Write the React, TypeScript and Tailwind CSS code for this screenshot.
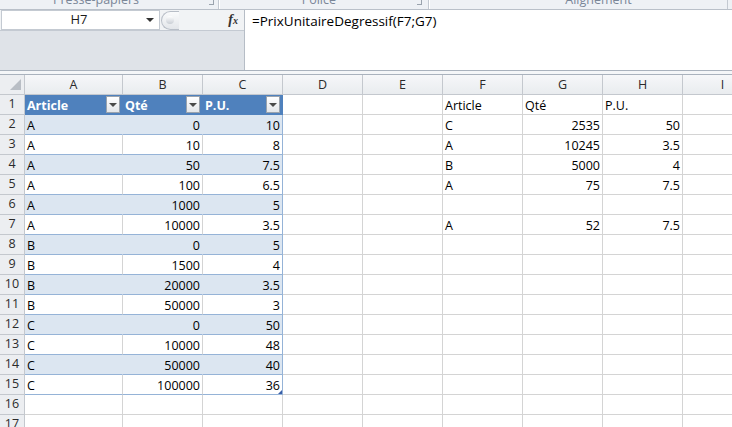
import React from 'react';

const COLS = ['A', 'B', 'C', 'D', 'E', 'F', 'G', 'H', 'I'];

type V = string | number | null;

const table: [string, number, number][] = [
  ['A', 0, 10],
  ['A', 10, 8],
  ['A', 50, 7.5],
  ['A', 100, 6.5],
  ['A', 1000, 5],
  ['A', 10000, 3.5],
  ['B', 0, 5],
  ['B', 1500, 4],
  ['B', 20000, 3.5],
  ['B', 50000, 3],
  ['C', 0, 50],
  ['C', 10000, 48],
  ['C', 50000, 40],
  ['C', 100000, 36],
];

const right: Record<number, V[]> = {
  1: ['Article', 'Qté', 'P.U.'],
  2: ['C', 2535, 50],
  3: ['A', 10245, 3.5],
  4: ['B', 5000, 4],
  5: ['A', 75, 7.5],
  7: ['A', 52, 7.5],
};

function FilterButton() {
  return (
    <div className="mr-[2px] flex h-[17px] w-[14px] shrink-0 items-center justify-center self-center border border-[#9aa3ad] bg-gradient-to-b from-[#ffffff] to-[#e3e6ea]">
      <div className="h-0 w-0 border-x-[4px] border-t-[4px] border-x-transparent border-t-[#4a4a4a]" />
    </div>
  );
}

function Cell({ r, c }: { r: number; c: number }) {
  let value: V = null;
  let header = false;
  if (c <= 3 && r === 1) {
    value = ['Article', 'Qté', 'P.U.'][c - 1];
    header = true;
  } else if (c <= 3 && r >= 2 && r <= 15) {
    value = table[r - 2][c - 1];
  } else if (c >= 6 && c <= 8 && right[r]) {
    value = right[r][c - 6];
  }

  const inTable = c <= 3 && r <= 15;
  let cls = 'border-r border-b bg-white border-[#d4d4d4]';
  if (inTable) {
    if (r === 1) {
      cls = 'border-r border-b bg-[#4f81bd] border-[#4f81bd]';
    } else if (r % 2 === 0) {
      cls =
        c < 3
          ? 'border-r border-b bg-[#dce6f1] border-r-[#dce6f1] border-b-[#95b3d7]'
          : 'border-r border-b bg-[#dce6f1] border-[#95b3d7]';
    } else {
      cls =
        c < 3
          ? 'border-r border-b bg-white border-r-[#d4d4d4] border-b-[#95b3d7]'
          : 'border-r border-b bg-white border-[#95b3d7]';
    }
  }

  const isNum = typeof value === 'number';
  return (
    <div
      className={`relative flex items-center overflow-hidden ${cls} ${
        isNum ? 'justify-end pr-[2px]' : 'justify-between pl-[2px]'
      }`}
    >
      {value !== null && (
        <span
          className={`mt-[3px] whitespace-nowrap leading-none ${
            header ? 'font-bold text-white' : 'text-black'
          }`}
        >
          {String(value)}
        </span>
      )}
      {header && <FilterButton />}
      {inTable && r === 15 && c === 3 && (
        <div className="absolute bottom-0 right-0 h-0 w-0 border-b-[4px] border-l-[4px] border-b-[#3a5fa8] border-l-transparent" />
      )}
    </div>
  );
}

function RibbonLabels() {
  return (
    <div className="h-[10px] overflow-hidden border-b border-[#b9c0c9] bg-[#eef1f5]">
      <div className="-mt-[7px] flex h-[16px] items-start text-[12.5px] leading-[14px] text-[#7a8698]">
        <div className="flex w-[218px] items-start justify-end">
          <span className="mr-[70px]">Presse-papiers</span>
          <div className="mr-[4px] mt-[7px] h-[5px] w-[5px] border-b border-r border-[#9aa3ad]" />
        </div>
        <div className="h-[16px] w-[1px] bg-[#c3c9d1]" />
        <div className="h-[16px] w-[1px] bg-white" />
        <div className="flex w-[208px] items-start justify-end">
          <span className="mr-[81px]">Police</span>
          <div className="mr-[6px] mt-[7px] h-[5px] w-[5px] border-b border-r border-[#9aa3ad]" />
        </div>
        <div className="h-[16px] w-[1px] bg-[#c3c9d1]" />
        <div className="h-[16px] w-[1px] bg-white" />
        <div className="flex w-[297px] justify-center pl-[40px]">
          <span>Alignement</span>
        </div>
        <div className="h-[16px] w-[1px] bg-[#c3c9d1]" />
      </div>
    </div>
  );
}

function FormulaBar() {
  return (
    <div className="flex h-[61px] border-b border-[#a9b2bd]">
      <div className="flex w-[245px] flex-col border-r border-[#b6bdc6] bg-[#dfe3e8]">
        <div className="flex h-[21px] border-b border-[#c4cad2] bg-[#f1f3f5]">
          <div className="ml-[1px] flex w-[159px] items-center border border-[#c4cad2] bg-white">
            <span className="flex-1 pl-[10px] text-center text-[13px] text-[#1b1b1b]">H7</span>
            <div className="mr-[5px] h-0 w-0 border-x-[4px] border-t-[4px] border-x-transparent border-t-[#333]" />
          </div>
          <div className="flex flex-1 items-center">
            <div className="ml-[1px] flex h-[19px] w-[18px] items-center justify-start rounded-l-full border border-r-0 border-[#b8bec7] bg-gradient-to-b from-[#fafbfc] to-[#e3e6ea] pl-[4px]">
              <div className="h-[8px] w-[8px] rounded-full bg-gradient-to-b from-[#ffffff] to-[#c9ced5]" />
            </div>
            <div className="flex-1" />
            <span className="mr-[6px] font-['Liberation_Serif',serif] text-[14px] font-bold italic leading-none text-[#333]">
              f<span className="text-[10px]">x</span>
            </span>
          </div>
        </div>
      </div>
      <div className="flex-1 bg-white pl-[7px] pt-[3px] text-[13.5px] leading-[16px] text-black">
        =PrixUnitaireDegressif(F7;G7)
      </div>
    </div>
  );
}

export default function App() {
  const rows = Array.from({ length: 17 }, (_, i) => i + 1);
  return (
    <div className="h-[427px] w-[732px] overflow-hidden bg-white font-['Open_Sans',sans-serif] text-[12.5px]">
      <RibbonLabels />
      <FormulaBar />
      <div className="h-[4px] border-b border-[#a9b2bd] bg-[#f4f6f8]" />
      <div className="grid grid-cols-[25px_98px_80px_80px_80px_80px_80px_80px_80px_80px] auto-rows-[20px]">
        <div className="relative border-b border-r border-[#c4c8ce] bg-[#eceef1]">
          <div className="absolute bottom-[4px] right-[3px] h-0 w-0 border-b-[11px] border-l-[11px] border-b-[#b9bec5] border-l-transparent" />
        </div>
        {COLS.map((col) => (
          <div
            key={col}
            className="flex items-center justify-center border-b border-r border-[#c4c8ce] bg-gradient-to-b from-[#f6f7f9] to-[#e9ecef] pt-[1px] text-[#2b2b2b]"
          >
            {col}
          </div>
        ))}
        {rows.map((r) => (
          <React.Fragment key={r}>
            <div className="flex items-center justify-center border-b border-r border-[#c4c8ce] bg-[#eceef1] text-[#2b2b2b]">
              {r}
            </div>
            {COLS.map((_, ci) => (
              <Cell key={ci} r={r} c={ci + 1} />
            ))}
          </React.Fragment>
        ))}
      </div>
    </div>
  );
}
